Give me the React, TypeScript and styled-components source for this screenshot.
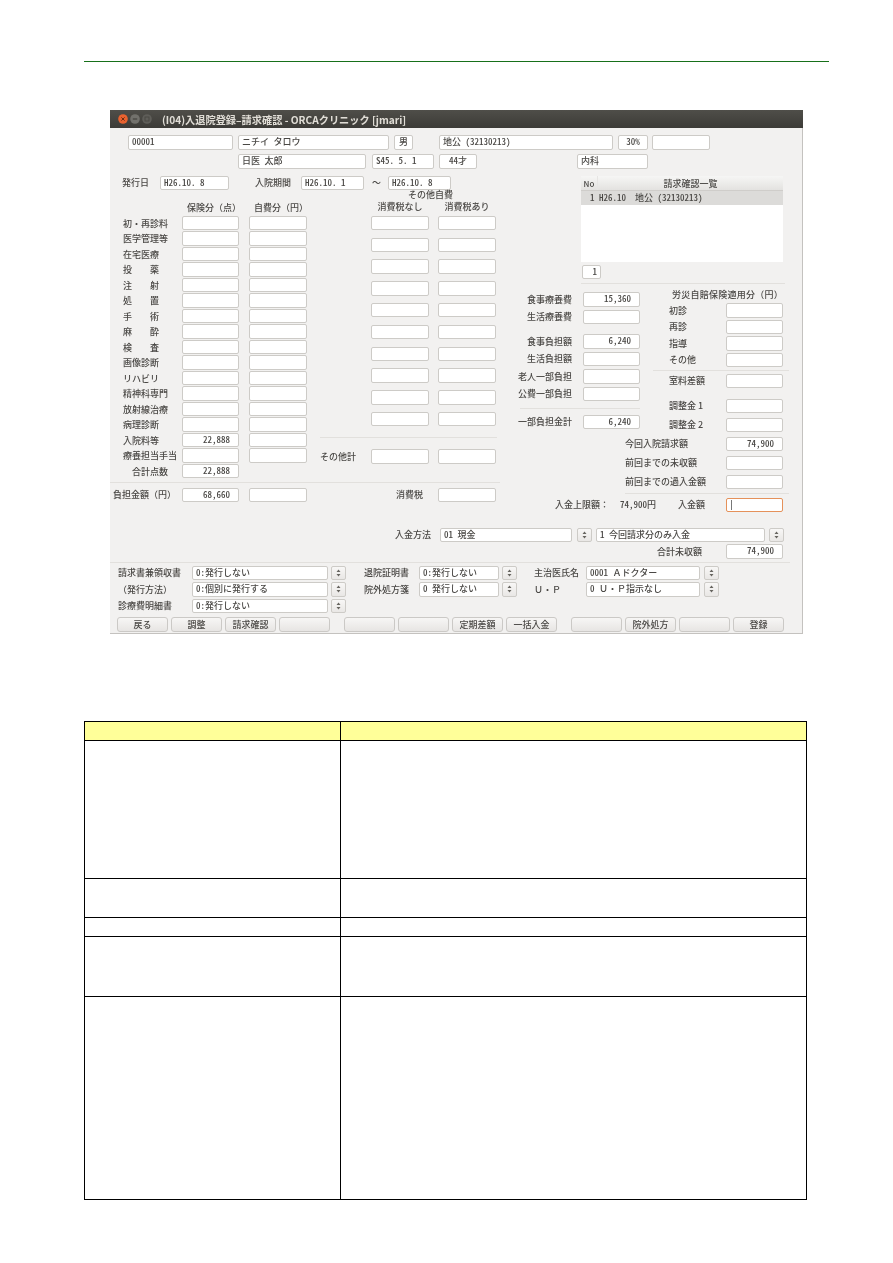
import { Fragment } from "react";
import styled, { createGlobalStyle } from "styled-components";

const GlobalStyle = createGlobalStyle`
  html, body {
    margin: 0;
    padding: 0;
    background: #ffffff;
  }
`;

const Page = styled.div`
  width: 893px;
  height: 1263px;
  padding: 61px 0 0 84px;
  box-sizing: border-box;
  overflow: hidden;
`;

const HeaderRule = styled.div`
  width: 745px;
  height: 1px;
  background: #17701a;
`;

const Window = styled.div`
  width: 693px;
  height: 524px;
  margin: 48px 0 0 26px;
  background: #f2f1f0;
  font-family: "Noto Sans CJK JP", sans-serif;
  font-size: 9px;
  font-weight: 500;
  color: #4a4845;
  overflow: hidden;
  filter: blur(0.55px);
  box-shadow: inset -1px -1px 0 #c4c2bf;
`;

const TitleBar = styled.div`
  height: 18px;
  display: flex;
  align-items: center;
  padding-left: 8px;
  background: linear-gradient(#4f4e49, #3c3b37);
`;

const WindowButtons = styled.svg`
  width: 36px;
  height: 12px;
  flex: none;
`;

const TitleText = styled.span`
  margin-left: 8px;
  font-size: 10.2px;
  font-weight: 700;
  color: #e0ddd6;
  white-space: nowrap;
`;

const Header = styled.div`
  padding: 7px 0 0 18px;
`;

const HeaderRow = styled.div<{ $pl?: number; $mt?: number }>`
  display: flex;
  padding-left: ${(p) => p.$pl ?? 0}px;
  margin-top: ${(p) => p.$mt ?? 0}px;
`;

const Field = styled.div<{ $w: number; $ml?: number; $pr?: number; $center?: boolean; $active?: boolean }>`
  width: ${(p) => p.$w}px;
  height: 14.5px;
  margin-left: ${(p) => p.$ml ?? 0}px;
  flex: none;
  box-sizing: border-box;
  padding: 0 ${(p) => p.$pr ?? 3}px 0 3px;
  background: #ffffff;
  border: 1px solid ${(p) => (p.$active ? "#e5915a" : "#cdcbc7")};
  border-radius: 2px;
  font-size: 9px;
  line-height: 12.5px;
  font-feature-settings: "hwid";
  text-align: ${(p) => (p.$pr ? "right" : p.$center ? "center" : "left")};
  white-space: pre;
  overflow: hidden;
`;

const Wide = styled.span`
  font-feature-settings: normal;
`;

const Caret = styled.span`
  display: block;
  width: 1px;
  height: 10px;
  margin: 1px 0 0 1px;
  background: #777777;
`;

const Form = styled.div`
  display: flex;
  margin-top: 7px;
`;

const LeftPane = styled.div`
  width: 390px;
  flex: none;
`;

const DateRow = styled.div`
  display: flex;
  align-items: center;
  height: 14.5px;
`;

const DateLabel = styled.span<{ $ml: number; $w: number }>`
  width: ${(p) => p.$w}px;
  margin-left: ${(p) => p.$ml}px;
  flex: none;
`;

const Columns = styled.div`
  display: flex;
  height: 291px;
`;

const FeeCol = styled.div`
  width: 197px;
  flex: none;
`;

const FeeGrid = styled.div`
  display: grid;
  grid-template-columns: 62px 57px 58px;
  grid-auto-rows: 14px;
  column-gap: 10px;
  row-gap: 1.5px;
  align-items: center;
`;

const FeeHeads = styled(FeeGrid)`
  height: 26px;
  padding-bottom: 2px;
  box-sizing: border-box;
  align-content: end;
`;

const ColHead = styled.div<{ $shift?: number }>`
  padding-left: ${(p) => p.$shift ?? 0}px;
  text-align: center;
  white-space: nowrap;
`;

const RowLabel = styled.div<{ $pl?: number }>`
  padding-left: ${(p) => p.$pl ?? 13}px;
  white-space: pre;
`;

const OtherCol = styled.div`
  width: 177px;
  margin-left: 13px;
  flex: none;
`;

const OtherGrid = styled.div`
  display: grid;
  grid-template-columns: 42px 58px 58px;
  grid-auto-rows: 14px;
  column-gap: 9px;
  row-gap: 7.8px;
  align-items: center;
`;

const OtherTitle = styled.div`
  height: 10px;
  line-height: 10px;
  padding-left: 88px;
  white-space: nowrap;
`;

const OtherHeads = styled(OtherGrid)`
  height: 16px;
  padding-bottom: 2px;
  box-sizing: border-box;
  grid-auto-rows: 13px;
`;

const Divider = styled.div<{ $mt?: number; $mb?: number; $ml?: number; $w?: number }>`
  height: 1px;
  margin: ${(p) => p.$mt ?? 0}px 0 ${(p) => p.$mb ?? 0}px ${(p) => p.$ml ?? 0}px;
  width: ${(p) => (p.$w ? `${p.$w}px` : "auto")};
  background: #e2e0dd;
`;

const LowerRow = styled.div`
  display: flex;
  align-items: center;
`;

const TaxLabel = styled.span`
  width: 42px;
  margin-left: 89px;
  flex: none;
`;

const RightPane = styled.div`
  width: 303px;
  flex: none;
`;

const ListFrame = styled.div`
  width: 204px;
  margin-left: 81px;
  padding-bottom: 4px;
  border-bottom: 1px solid #e2e0dd;
`;

const ListHead = styled.div`
  display: flex;
  height: 15px;
  margin-right: 2px;
  line-height: 15px;
  background: linear-gradient(#f6f6f5, #e3e2e0);
  border-bottom: 1px solid #cfcdca;
  box-sizing: border-box;
  text-align: center;
`;

const ListNo = styled.span`
  width: 16px;
  flex: none;
  border-right: 1px solid #e6e5e3;
  font-size: 8px;
`;

const ListTitle = styled.span`
  flex: 1;
`;

const ListBody = styled.div`
  height: 71px;
  margin: 0 2px 3px 0;
  background: #ffffff;
`;

const ListRow = styled.div`
  display: flex;
  height: 14px;
  line-height: 14px;
  padding-left: 9px;
  background: #dcdbd9;
  font-feature-settings: "hwid";
  white-space: pre;
`;

const RightColumns = styled.div`
  display: flex;
  margin-top: 8px;
`;

const MealCol = styled.div`
  width: 140px;
  flex: none;
`;

const MealRow = styled.div<{ $mt: number }>`
  display: flex;
  align-items: center;
  justify-content: flex-end;
  gap: 11px;
  margin-top: ${(p) => p.$mt}px;
  white-space: nowrap;
`;

const InsCol = styled.div`
  width: 144px;
  margin-left: 5px;
  flex: none;
`;

const InsTitle = styled.div`
  height: 11px;
  line-height: 5px;
  padding-left: 27px;
  white-space: nowrap;
  font-size: 9px;
  letter-spacing: 0.25px;
`;

const InsRow = styled.div<{ $mt: number }>`
  display: flex;
  align-items: center;
  justify-content: space-between;
  padding: 0 6px 0 24px;
  margin-top: ${(p) => p.$mt}px;
`;

const SummaryRow = styled.div<{ $mt: number }>`
  display: flex;
  align-items: center;
  justify-content: space-between;
  width: 158px;
  margin: ${(p) => p.$mt}px 0 0 125px;
  white-space: nowrap;
`;

const PaidRow = styled.div`
  display: flex;
  align-items: center;
  width: 228px;
  margin: 0 0 0 55px;
  white-space: nowrap;
`;

const PaidAmount = styled.span`
  margin-left: 11px;
  font-feature-settings: "hwid";
`;

const PaidLabel = styled.span`
  margin: 0 21px 0 auto;
`;

const PayRow = styled.div`
  display: flex;
  align-items: center;
  padding-left: 285px;
  margin-top: 15.5px;
`;

const PayLabel = styled.span`
  width: 45px;
  flex: none;
`;

const Spin = styled.div<{ $ml: number; $w?: number }>`
  width: ${(p) => p.$w ?? 15}px;
  height: 14.5px;
  margin-left: ${(p) => p.$ml}px;
  flex: none;
  box-sizing: border-box;
  display: flex;
  align-items: center;
  justify-content: center;
  background: linear-gradient(#f8f7f6, #e9e7e5);
  border: 1px solid #cdcbc7;
  border-radius: 2px;

  svg {
    width: 5px;
    height: 8px;
  }
`;

const TotalRow = styled.div`
  display: flex;
  align-items: center;
  justify-content: flex-end;
  gap: 24px;
  padding-right: 20px;
  margin-top: 2px;
`;

const Selects = styled.div`
  display: flex;
  align-items: flex-start;
`;

const SelectCol = styled.div<{ $ml: number }>`
  margin-left: ${(p) => p.$ml}px;
  flex: none;
`;

const SelectRow = styled.div<{ $label: number }>`
  display: grid;
  grid-template-columns: ${(p) => p.$label}px auto auto;
  align-items: center;
  height: 14.5px;
  margin-bottom: 2px;
  white-space: nowrap;
`;

const Buttons = styled.div`
  display: flex;
  gap: 14px;
  margin-top: 1.5px;
  padding-left: 7px;
`;

const ButtonGroup = styled.div`
  display: flex;
  gap: 3px;
`;

const Button = styled.div`
  width: 51px;
  height: 15px;
  box-sizing: border-box;
  line-height: 13px;
  text-align: center;
  background: linear-gradient(#f7f6f5, #e7e5e3);
  border: 1px solid #cbc9c6;
  border-radius: 3px;
  white-space: nowrap;
`;

const Table = styled.table`
  width: 722px;
  height: 478px;
  margin-top: 87px;
  border-collapse: collapse;
  table-layout: fixed;

  td {
    border: 1px solid #000000;
    padding: 0;
  }
`;

const TableRow = styled.tr<{ $h: number; $head?: boolean }>`
  height: ${(p) => p.$h}px;
  background: ${(p) => (p.$head ? "#ffff99" : "#ffffff")};
`;

function SpinIcon() {
  return (
    <svg viewBox="0 0 5 8">
      <path d="M2.5 0.5 L4.5 3 H0.5 Z M2.5 7.5 L4.5 5 H0.5 Z" fill="#66645f" />
    </svg>
  );
}

const NUM_PAD = 8;

const FEE_ROWS: [string, string?][] = [
  ["初・再診料"],
  ["医学管理等"],
  ["在宅医療"],
  ["投　　薬"],
  ["注　　射"],
  ["処　　置"],
  ["手　　術"],
  ["麻　　酔"],
  ["検　　査"],
  ["画像診断"],
  ["リハビリ"],
  ["精神科専門"],
  ["放射線治療"],
  ["病理診断"],
  ["入院料等", "22,888"],
  ["療養担当手当"],
];

const MEAL_ROWS: [string, string, number][] = [
  ["食事療養費", "15,360", 0],
  ["生活療養費", "", 3],
  ["食事負担額", "6,240", 10],
  ["生活負担額", "", 3],
  ["老人一部負担", "", 3],
  ["公費一部負担", "", 3],
];

const ROW_HEIGHTS = [19, 138, 39, 19, 60, 203];

export default function App() {
  return (
    <Page>
      <GlobalStyle />
      <HeaderRule />
      <Window>
        <TitleBar>
          <WindowButtons viewBox="0 0 36 12">
            <circle cx="5" cy="6" r="4.8" fill="#e9622f" />
            <path d="M3.4 4.4 L6.6 7.6 M6.6 4.4 L3.4 7.6" stroke="#6b2c12" strokeWidth="1" />
            <circle cx="17" cy="6" r="4.8" fill="#72716c" />
            <path d="M14.8 6 H19.2" stroke="#45443f" strokeWidth="1.2" />
            <circle cx="29" cy="6" r="4.8" fill="#5f5e59" />
            <rect x="27" y="4" width="4" height="4" fill="none" stroke="#45443f" strokeWidth="0.8" />
          </WindowButtons>
          <TitleText>(I04)入退院登録–請求確認 - ORCAクリニック [jmari]</TitleText>
        </TitleBar>

        <Header>
          <HeaderRow>
            <Field $w={105}>00001</Field>
            <Field $w={151} $ml={5}>ニチイ　タロウ</Field>
            <Field $w={19} $ml={5} $center>男</Field>
            <Field $w={174} $ml={26}>地公 (32130213)</Field>
            <Field $w={30} $ml={5} $center>30%</Field>
            <Field $w={58} $ml={4} />
          </HeaderRow>
          <HeaderRow $pl={110} $mt={4.5}>
            <Field $w={128}>日医　太郎</Field>
            <Field $w={62} $ml={6}>S45. 5. 1</Field>
            <Field $w={38} $ml={5} $center>44才</Field>
            <Field $w={71} $ml={100}>内科</Field>
          </HeaderRow>
        </Header>

        <Form>
          <LeftPane>
            <DateRow>
              <DateLabel $ml={12} $w={38}>発行日</DateLabel>
              <Field $w={69}>H26.10. 8</Field>
              <DateLabel $ml={26} $w={46}>入院期間</DateLabel>
              <Field $w={63}>H26.10. 1</Field>
              <DateLabel $ml={8} $w={16}>〜</DateLabel>
              <Field $w={63}>H26.10. 8</Field>
            </DateRow>

            <Columns>
              <FeeCol>
                <FeeHeads>
                  <span />
                  <ColHead $shift={5}>保険分（点）</ColHead>
                  <ColHead $shift={5}>自費分（円）</ColHead>
                </FeeHeads>
                <FeeGrid>
                  {FEE_ROWS.map(([label, value]) => (
                    <Fragment key={label}>
                      <RowLabel>{label}</RowLabel>
                      <Field $w={57} $pr={NUM_PAD}>{value}</Field>
                      <Field $w={58} />
                    </Fragment>
                  ))}
                  <RowLabel $pl={22}>合計点数</RowLabel>
                  <Field $w={57} $pr={NUM_PAD}>22,888</Field>
                </FeeGrid>
              </FeeCol>

              <OtherCol>
                <OtherTitle>その他自費</OtherTitle>
                <OtherHeads>
                  <span />
                  <ColHead>消費税なし</ColHead>
                  <ColHead>消費税あり</ColHead>
                </OtherHeads>
                <OtherGrid>
                  {Array.from({ length: 10 }, (_, i) => (
                    <Fragment key={i}>
                      <span />
                      <Field $w={58} />
                      <Field $w={58} />
                    </Fragment>
                  ))}
                </OtherGrid>
                <Divider $mt={11} $mb={11.5} />
                <OtherGrid>
                  <span>その他計</span>
                  <Field $w={58} />
                  <Field $w={58} />
                </OtherGrid>
              </OtherCol>
            </Columns>

            <Divider $mt={1} $mb={4.5} />
            <LowerRow>
              <FeeGrid>
                <RowLabel $pl={3}>負担金額（円）</RowLabel>
                <Field $w={57} $pr={NUM_PAD}>68,660</Field>
                <Field $w={58} />
              </FeeGrid>
              <TaxLabel>消費税</TaxLabel>
              <Field $w={58} />
            </LowerRow>
          </LeftPane>

          <RightPane>
            <ListFrame>
              <ListHead>
                <ListNo>No</ListNo>
                <ListTitle>請求確認一覧</ListTitle>
              </ListHead>
              <ListBody>
                <ListRow>1 H26.10  地公 (32130213)</ListRow>
              </ListBody>
              <Field $w={19} $ml={1} $pr={3}>1</Field>
            </ListFrame>

            <RightColumns>
              <MealCol>
                {MEAL_ROWS.map(([label, value, mt]) => (
                  <MealRow key={label} $mt={mt}>
                    <span>{label}</span>
                    <Field $w={57} $pr={NUM_PAD}>{value}</Field>
                  </MealRow>
                ))}
                <Divider $mt={6.5} $mb={6} $ml={20} />
                <MealRow $mt={0}>
                  <span>一部負担金計</span>
                  <Field $w={57} $pr={NUM_PAD}>6,240</Field>
                </MealRow>
              </MealCol>

              <InsCol>
                <InsTitle>労災自賠保険適用分（円）</InsTitle>
                <InsRow $mt={0}><span>初診</span><Field $w={57} /></InsRow>
                <InsRow $mt={2}><span>再診</span><Field $w={57} /></InsRow>
                <InsRow $mt={2}><span>指導</span><Field $w={57} /></InsRow>
                <InsRow $mt={2}><span>その他</span><Field $w={57} /></InsRow>
                <Divider $mt={2.5} $ml={8} />
                <InsRow $mt={3}><span>室料差額</span><Field $w={57} /></InsRow>
                <InsRow $mt={10.5}><span>調整金 1</span><Field $w={57} /></InsRow>
                <InsRow $mt={4.5}><span>調整金 2</span><Field $w={57} /></InsRow>
              </InsCol>
            </RightColumns>

            <SummaryRow $mt={4.5}>
              <span>今回入院請求額</span>
              <Field $w={57} $pr={NUM_PAD}>74,900</Field>
            </SummaryRow>
            <SummaryRow $mt={4.5}>
              <span>前回までの未収額</span>
              <Field $w={57} />
            </SummaryRow>
            <SummaryRow $mt={4.5}>
              <span>前回までの過入金額</span>
              <Field $w={57} />
            </SummaryRow>
            <Divider $mt={3.5} $mb={4} $ml={125} $w={164} />
            <PaidRow>
              <span>入金上限額：</span>
              <PaidAmount>74,900円</PaidAmount>
              <PaidLabel>入金額</PaidLabel>
              <Field $w={57} $active><Caret /></Field>
            </PaidRow>
          </RightPane>
        </Form>

        <PayRow>
          <PayLabel>入金方法</PayLabel>
          <Field $w={132}>01 現金</Field>
          <Spin $ml={5}><SpinIcon /></Spin>
          <Field $w={169} $ml={4}>1 今回請求分のみ入金</Field>
          <Spin $ml={4}><SpinIcon /></Spin>
        </PayRow>
        <TotalRow>
          <span>合計未収額</span>
          <Field $w={57} $pr={NUM_PAD}>74,900</Field>
        </TotalRow>
        <Divider $mt={3.5} $mb={2.5} $w={680} />

        <Selects>
          <SelectCol $ml={8}>
            <SelectRow $label={74}>
              <span>請求書兼領収書</span>
              <Field $w={136}>0:発行しない</Field>
              <Spin $ml={3}><SpinIcon /></Spin>
            </SelectRow>
            <SelectRow $label={74}>
              <span>（発行方法）</span>
              <Field $w={136}>0:個別に発行する</Field>
              <Spin $ml={3}><SpinIcon /></Spin>
            </SelectRow>
            <SelectRow $label={74}>
              <span>診療費明細書</span>
              <Field $w={136}>0:発行しない</Field>
              <Spin $ml={3}><SpinIcon /></Spin>
            </SelectRow>
          </SelectCol>
          <SelectCol $ml={18}>
            <SelectRow $label={55}>
              <span>退院証明書</span>
              <Field $w={80}>0:発行しない</Field>
              <Spin $ml={3}><SpinIcon /></Spin>
            </SelectRow>
            <SelectRow $label={55}>
              <span>院外処方箋</span>
              <Field $w={80}>0 発行しない</Field>
              <Spin $ml={3}><SpinIcon /></Spin>
            </SelectRow>
          </SelectCol>
          <SelectCol $ml={17}>
            <SelectRow $label={52}>
              <span>主治医氏名</span>
              <Field $w={114}>0001 <Wide>Ａ</Wide>ドクター</Field>
              <Spin $ml={4}><SpinIcon /></Spin>
            </SelectRow>
            <SelectRow $label={52}>
              <span>Ｕ・Ｐ</span>
              <Field $w={114}>0 <Wide>Ｕ・Ｐ</Wide>指示なし</Field>
              <Spin $ml={4}><SpinIcon /></Spin>
            </SelectRow>
          </SelectCol>
        </Selects>

        <Buttons>
          <ButtonGroup>
            <Button>戻る</Button>
            <Button>調整</Button>
            <Button>請求確認</Button>
            <Button />
          </ButtonGroup>
          <ButtonGroup>
            <Button />
            <Button />
            <Button>定期差額</Button>
            <Button>一括入金</Button>
          </ButtonGroup>
          <ButtonGroup>
            <Button />
            <Button>院外処方</Button>
            <Button />
            <Button>登録</Button>
          </ButtonGroup>
        </Buttons>
      </Window>

      <Table>
        <colgroup>
          <col width={256} />
          <col width={466} />
        </colgroup>
        <tbody>
          {ROW_HEIGHTS.map((h, i) => (
            <TableRow key={i} $h={h} $head={i === 0}>
              <td />
              <td />
            </TableRow>
          ))}
        </tbody>
      </Table>
    </Page>
  );
}
